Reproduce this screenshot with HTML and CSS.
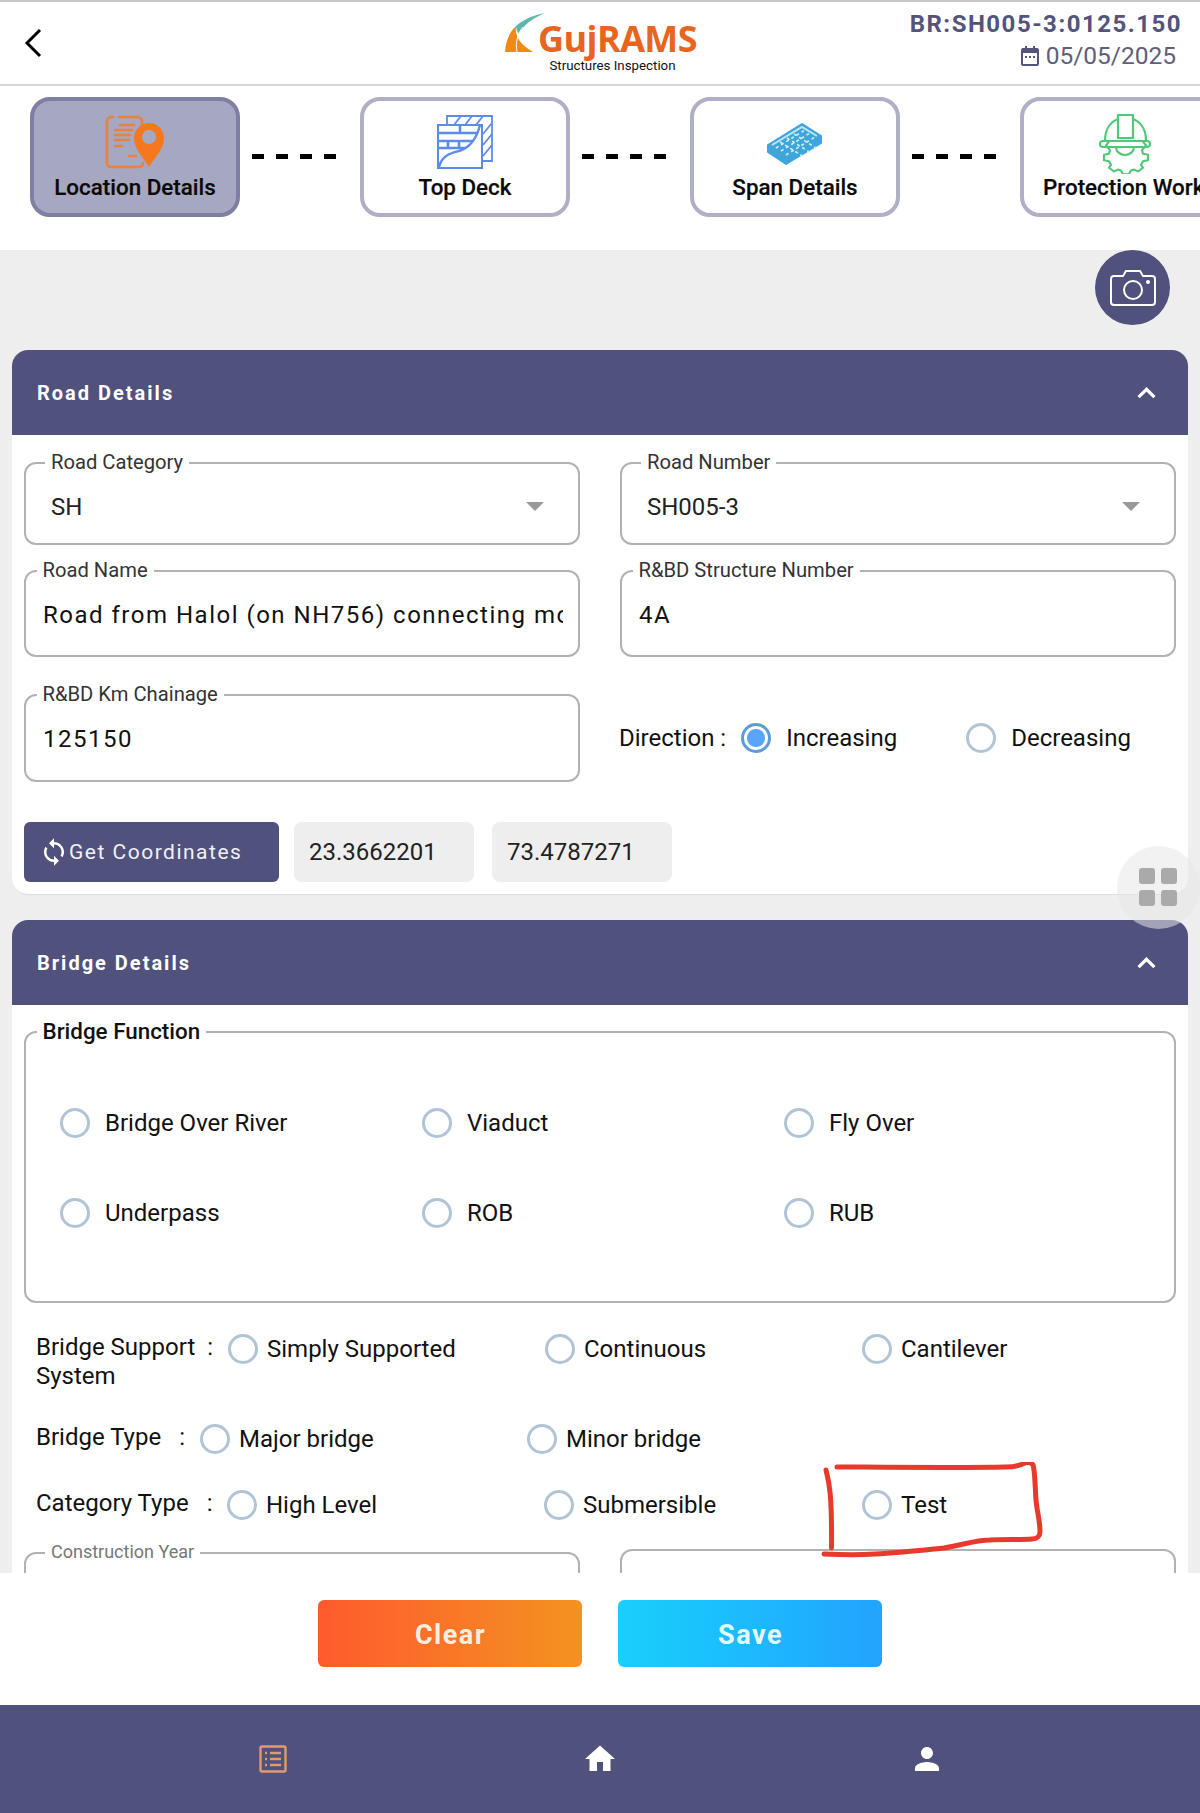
FILE: index.html
```html
<!DOCTYPE html>
<html lang="en">
<head>
<meta charset="utf-8">
<title>GujRAMS Structures Inspection</title>
<link rel="stylesheet" href="styles.css">
</head>
<body>
<div class="app">
  <header class="topbar">
    <svg class="back" viewBox="0 0 18 30"><path d="M16 2 3 15l13 13"/></svg>
    <div class="logo">
      <svg class="logo-mark" viewBox="0 0 40 40">
        <path fill="#f08a12" d="M0 39C1 26 5 19 11 13c-1 9 2 17 17 26z"/>
        <path fill="#5cb8ad" d="M11 13C20 5 30 2 40 0 28 5 18 12 14 21c-2-3-3-5-3-8z"/>
        <path fill="none" stroke="#fff" stroke-width="1" d="M12 39C10 29 13 20 18 14"/>
      </svg>
      <div class="logo-text">
        <span class="logo-name">GujRAMS</span>
        <span class="logo-sub">Structures Inspection</span>
      </div>
    </div>
    <div class="meta">
      <div class="meta-id">BR:SH005-3:0125.150</div>
      <div class="meta-date">
        <svg class="cal" viewBox="0 0 18 20"><path d="M4 0h2v2h6V0h2v2h2a2 2 0 0 1 2 2v14a2 2 0 0 1-2 2H2a2 2 0 0 1-2-2V4a2 2 0 0 1 2-2h2zM2 7v11h14V7zm2 3h2v2H4zm4 0h2v2H8zm4 0h2v2h-2z"/></svg>
        <span>05/05/2025</span>
      </div>
    </div>
  </header>

  <nav class="stepper">
    <div class="step step-active">
      <svg class="step-icon" viewBox="0 0 60 60">
        <g fill="none" stroke="#e8823c" stroke-width="2.6" stroke-linecap="round">
          <path d="M8 3H6a4 4 0 0 0-4 4v42a4 4 0 0 0 4 4h28a4 4 0 0 0 4-4"/>
          <path d="M14 3h18a5 5 0 0 1 5 5v4"/>
          <path d="M15 11h14M10 16h17M10 21h15M10 26h14M10 32h7M24 42h7"/>
        </g>
        <path fill="#f5781e" d="M44 9a15 15 0 0 1 15 15c0 11-9 19-15 29-6-10-15-18-15-29A15 15 0 0 1 44 9z"/>
        <circle cx="44" cy="23" r="7" fill="#a6a7c0"/>
      </svg>
      <span class="step-label">Location Details</span>
    </div>
    <div class="dashes"><i></i><i></i><i></i><i></i></div>
    <div class="step">
      <svg class="step-icon" viewBox="0 0 60 60">
        <g fill="none" stroke="#5b8de8" stroke-width="1.8">
          <path d="M12 11V2h45v45H47"/>
          <path d="M19 11l7-9M30 11l7-9M41 11l7-9M48 20l9-11M48 31l9-11M48 42l9-11"/>
          <rect x="3" y="11" width="44" height="43" fill="#fff" stroke-width="2"/>
          <path stroke-width="2.6" d="M3 19h42M3 27h40M3 34h36M25 11v8M13 27v7M24 27v7"/>
          <path fill="#fff" stroke="none" d="M5 53c3-12 12-14 20-16 10-3 16-10 20-24v40z"/>
          <path stroke-width="2.4" d="M4 53c3-12 12-14 20-16 10-3 17-10 21-26"/>
        </g>
      </svg>
      <span class="step-label">Top Deck</span>
    </div>
    <div class="dashes"><i></i><i></i><i></i><i></i></div>
    <div class="step">
      <svg class="step-icon" viewBox="0 0 60 60">
        <path fill="#3fa6dc" stroke="#3fa6dc" stroke-width="2" stroke-linejoin="round" d="M3 31 37 10l19 12v7L21 50 3 38z"/>
        <path fill="none" stroke="#bfe6f7" stroke-width="2" d="M7 31 37 13l15 9"/>
        <g fill="none" stroke="#d6f0fb" stroke-width="1.6" stroke-dasharray="3 3">
          <path d="M11 34 40 16M16 37 45 19M21 41 50 23M15 28l24 15M22 24l24 15M29 20l22 14"/>
        </g>
      </svg>
      <span class="step-label">Span Details</span>
    </div>
    <div class="dashes"><i></i><i></i><i></i><i></i></div>
    <div class="step">
      <svg class="step-icon" viewBox="0 0 60 60">
        <g fill="none" stroke="#4fc878" stroke-width="2.2" stroke-linejoin="round">
          <path d="M23 5C15 8 10 16 10 27M38 5c8 3 13 11 13 22"/>
          <rect x="5" y="27" width="50" height="6" rx="3"/>
          <rect x="23" y="1" width="15" height="23"/>
          <path d="M21 33a9 8 0 0 0 18 0"/>
          <path d="M14 33l-3 4 4 5-1 4-5 1v6l5 1 2 4-2 3 5 4 4-2 3 1 2 4h6l2-4 3-1 4 2 5-4-2-3 2-4 5-1v-6l-5-1-1-4 4-5-3-4" transform="translate(0 -3) scale(1 .93)"/>
        </g>
      </svg>
      <span class="step-label step-label-start">Protection Works</span>
    </div>
  </nav>

  <main class="content">
    <div class="camera-row">
      <button class="camera" type="button" aria-label="Camera">
        <svg viewBox="0 0 46 36"><g fill="none" stroke="#fff" stroke-width="2"><path d="M4 6h9l3-5h14l3 5h9a3 3 0 0 1 3 3v23a3 3 0 0 1-3 3H4a3 3 0 0 1-3-3V9a3 3 0 0 1 3-3z"/><circle cx="23" cy="20" r="9"/></g><circle cx="38" cy="12" r="2" fill="#fff"/></svg>
      </button>
    </div>

    <section class="panel">
      <div class="panel-head"><h2>Road Details</h2><svg class="chev" viewBox="0 0 18 11"><path d="M1.500 9.500 9 2l7.500 7.500"/></svg></div>
      <div class="panel-body">
        <div class="two">
          <div class="field field-select">
            <span class="legend legend-wide">Road Category</span>
            <span class="value">SH</span><i class="caret"></i>
          </div>
          <div class="field field-select">
            <span class="legend legend-wide">Road Number</span>
            <span class="value">SH005-3</span><i class="caret"></i>
          </div>
        </div>
        <div class="two two-name">
          <div class="field field-input">
            <span class="legend">Road Name</span>
            <span class="value value-spaced value-clip">Road from Halol (on NH756) connecting mo</span>
          </div>
          <div class="field field-input">
            <span class="legend">R&amp;BD Structure Number</span>
            <span class="value value-spaced">4A</span>
          </div>
        </div>
        <div class="two two-chain">
          <div class="field field-input field-chain">
            <span class="legend">R&amp;BD Km Chainage</span>
            <span class="value value-spaced">125150</span>
          </div>
          <div class="direction">
            <span class="direction-label">Direction :</span>
            <label class="option option-increasing"><i class="radio radio-on"></i>Increasing</label>
            <label class="option"><i class="radio"></i>Decreasing</label>
          </div>
        </div>
        <div class="coords">
          <button class="coord-btn" type="button">
            <svg viewBox="0 0 24 24"><path d="M12 4V1L8 5l4 4V6c3.310 0 6 2.690 6 6 0 1.010-.25 1.970-.7 2.800l1.460 1.460C19.540 15.030 20 13.570 20 12c0-4.420-3.580-8-8-8zm0 14c-3.310 0-6-2.690-6-6 0-1.010.25-1.970.7-2.800L5.240 7.740C4.460 8.970 4 10.430 4 12c0 4.420 3.580 8 8 8v3l4-4-4-4v3z"/></svg>
            <span>Get Coordinates</span>
          </button>
          <div class="coord-box">23.3662201</div>
          <div class="coord-box">73.4787271</div>
        </div>
      </div>
    </section>

    <section class="panel panel-bridge">
      <div class="panel-head"><h2>Bridge Details</h2><svg class="chev" viewBox="0 0 18 11"><path d="M1.500 9.500 9 2l7.500 7.500"/></svg></div>
      <div class="panel-body panel-body-bridge">
        <div class="function-box">
          <span class="legend legend-strong">Bridge Function</span>
          <div class="function-grid">
            <label class="option"><i class="radio"></i>Bridge Over River</label>
            <label class="option"><i class="radio"></i>Viaduct</label>
            <label class="option"><i class="radio"></i>Fly Over</label>
            <label class="option"><i class="radio"></i>Underpass</label>
            <label class="option"><i class="radio"></i>ROB</label>
            <label class="option"><i class="radio"></i>RUB</label>
          </div>
        </div>
        <div class="choice choice-support">
          <div class="choice-label">Bridge Support<span class="colon colon-near">:</span> System</div>
          <label class="option"><i class="radio"></i>Simply Supported</label>
          <label class="option"><i class="radio"></i>Continuous</label>
          <label class="option"><i class="radio"></i>Cantilever</label>
        </div>
        <div class="choice choice-type">
          <div class="choice-label">Bridge Type<span class="colon">:</span></div>
          <label class="option"><i class="radio"></i>Major bridge</label>
          <label class="option"><i class="radio"></i>Minor bridge</label>
        </div>
        <div class="choice choice-category">
          <div class="choice-label">Category Type<span class="colon">:</span></div>
          <label class="option"><i class="radio"></i>High Level</label>
          <label class="option"><i class="radio"></i>Submersible</label>
          <label class="option"><i class="radio"></i>Test</label>
        </div>
        <div class="two two-year">
          <div class="field field-input field-year">
            <span class="legend legend-wide legend-muted">Construction Year</span>
          </div>
          <div class="field field-input"></div>
        </div>
      </div>
    </section>
  </main>

  <div class="actions">
    <button class="action action-clear" type="button">Clear</button>
    <button class="action action-save" type="button">Save</button>
  </div>

  <footer class="tabbar">
    <svg class="tab tab-list" viewBox="0 0 28 28"><g fill="none" stroke="#e09a6b" stroke-width="2.400"><rect x="1.500" y="1.500" width="25" height="25" rx="1.500"/><path d="M11 8h11M11 14h11M11 20h11M6 8h2M6 14h2M6 20h2"/></g></svg>
    <svg class="tab" viewBox="0 0 24 24"><path fill="#fff" d="M10 20v-6h4v6h5v-8h3L12 3 2 12h3v8z"/></svg>
    <svg class="tab" viewBox="0 0 24 24"><path fill="#fff" d="M12 12c2.210 0 4-1.790 4-4s-1.790-4-4-4-4 1.790-4 4 1.790 4 4 4zm0 2c-2.670 0-8 1.340-8 4v2h16v-2c0-2.660-5.330-4-8-4z"/></svg>
  </footer>

  <div class="fab"><i></i><i></i><i></i><i></i></div>

  <svg class="scribble" viewBox="0 0 240 110">
    <path d="M6 8C9 20 12 30 11.500 86"/>
    <path d="M4 92c20 1 38 1 51 0 26-1 50-4 69-6 18-3 32-8 46-8 14-1 30 0 42-1 5 0 8-3 8-7 0-12-3-20-4-32-1-14-1-30-3-35-2-3-5-3-8-2-4 2-10 4-19 4-50 1-150 0-169 0"/>
  </svg>
</div>
</body>
</html>
```
FILE: styles.css
```css
* { box-sizing: border-box; }
html, body { margin: 0; padding: 0; }
body { font-family: Roboto, "Liberation Sans", sans-serif; color: #111; background: #fff; }
.app { position: relative; height: 1813px; width: 1200px; overflow: hidden; display: flex; flex-direction: column; }

.topbar { height: 86px; flex: none; display: grid; grid-template-columns: 1fr auto 1fr; align-items: center; border-top: 2px solid #c8c8c8; border-bottom: 2px solid #d6d6d6; padding: 0 19px 0 24px; background: #fff; }
.back { width: 18px; height: 30px; fill: none; stroke: #000; stroke-width: 3; }
.logo { display: flex; align-items: flex-start; margin-left: -3px; }
.logo-mark { width: 40px; height: 40px; flex: none; }
.logo-text { display: flex; flex-direction: column; align-items: center; margin-left: -7px; margin-top: 7px; }
.logo-name { font-family: "Open Sans", sans-serif; font-weight: 700; font-size: 36px; line-height: 38px; color: #e9641e; letter-spacing: -.6px; }
.logo-sub { font-family: Roboto, sans-serif; font-size: 13.300px; line-height: 16px; color: #111; margin-right: 10px; }
.meta { justify-self: end; text-align: right; margin-top: -5px; }
.meta-id { font-weight: 700; font-size: 24px; line-height: 30px; letter-spacing: 1.500px; color: #53547c; margin-right: -1px; }
.meta-date { display: flex; align-items: center; justify-content: flex-end; gap: 7px; font-size: 24.500px; line-height: 34px; color: #5d6079; padding-right: 5px; }
.cal { width: 18px; height: 20px; fill: #53547c; }

.stepper { height: 164px; flex: none; display: flex; align-items: flex-start; padding: 11px 0 0 30px; background: #fff; overflow: hidden; }
.step { flex: none; width: 210px; height: 120px; border: 4.500px solid #afafc6; border-radius: 20px; background: #fff; display: flex; flex-direction: column; align-items: center; padding-top: 13px; }
.step-active { background: #a6a7c0; border-color: #7e7fa3; }
.step-icon { width: 60px; height: 60px; flex: none; }
.step-label { font-weight: 500; font-size: 22.400px; line-height: 28px; margin-top: -1px; color: #0a0a0a; white-space: nowrap; -webkit-text-stroke: .2px #0a0a0a; }
.step-label-start { align-self: flex-start; margin-left: 19px; }
.dashes { flex: none; width: 120px; height: 119px; display: flex; justify-content: flex-start; align-items: center; gap: 12px; padding-left: 12px; }
.dashes i { width: 12px; height: 5px; background: #000; }

.content { flex: 1; min-height: 0; overflow: hidden; background: #eee; padding: 0 12px; }
.camera-row { height: 100px; display: flex; justify-content: flex-end; padding-right: 18px; }
.camera { width: 75px; height: 75px; padding: 0; border: 0; border-radius: 50%; background: #50517c; display: flex; align-items: center; justify-content: center; }
.camera svg { width: 46px; height: 36px; }

.panel { background: #fff; border-radius: 16px; overflow: hidden; border-bottom: 1px solid #ddd; }
.panel-bridge { margin-top: 25px; border-bottom: 0; }
.panel-head { height: 85px; background: #50517c; display: flex; align-items: center; justify-content: space-between; padding: 0 32px 0 25px; }
.panel-head h2 { margin: 0; font-size: 20px; font-weight: 700; letter-spacing: 2px; color: #fff; }
.chev { width: 19px; height: 12px; fill: none; stroke: #fff; stroke-width: 3; }
.panel-body { padding: 27px 12px 12px; }
.panel-body-bridge { padding-top: 26px; }

.two { display: grid; grid-template-columns: 556px 556px; column-gap: 40px; }
.two-name { margin-top: 25px; }
.two-chain { margin-top: 37px; }
.two-year { margin-top: 29px; }

.field { position: relative; border: 2px solid #b2b2b2; border-radius: 12px; display: flex; align-items: center; }
.field-select { height: 83px; padding: 6px 34px 0 25px; justify-content: space-between; }
.field-input { height: 87px; padding: 3px 17px 0; }
.field-chain { height: 88px; padding-top: 2px; }
.field-year { margin-top: 3px; }
.legend { position: absolute; top: -14px; left: 10.500px; padding: 0 6px; background: #fff; font-size: 20.200px; line-height: 24px; color: #333; white-space: nowrap; }
.legend-wide { left: 19px; }
.legend-muted { color: #777; font-size: 18px; }
.legend-strong { top: -14px; left: 10.500px; color: #111; font-weight: 500; font-size: 22.400px; }
.value { font-size: 24px; color: #222; }
.value-spaced { letter-spacing: 1.500px; color: #111; }
.value-clip { display: block; flex: none; overflow: hidden; white-space: nowrap; width: 520px; }
.caret { width: 0; height: 0; border-left: 9px solid transparent; border-right: 9px solid transparent; border-top: 9px solid #999; }

.option { display: flex; align-items: center; gap: 15px; font-size: 24px; line-height: 30px; color: #111; white-space: nowrap; }
.radio { flex: none; display: block; width: 30px; height: 30px; border-radius: 50%; border: 3px solid #b0c4d6; background: #fff; position: relative; }
.radio-on { border-color: #5b9bdc; background: radial-gradient(circle at center, #5aa5fb 0 8.500px, #fff 9.500px); }

.direction { display: flex; align-items: center; margin-left: -1px; }
.direction-label { font-size: 24px; color: #111; margin-right: 15px; }
.option-increasing { width: 225px; }

.coords { display: flex; margin-top: 40px; height: 60px; }
.coord-btn { width: 255px; border: 0; border-radius: 6px; background: #50517c; color: #f1f1f5; display: flex; align-items: center; padding: 0 0 0 15px; font: 400 21px Roboto, sans-serif; letter-spacing: 1.500px; }
.coord-btn svg { width: 30px; height: 30px; fill: #fff; flex: none; }
.coord-box { width: 180px; border-radius: 8px; background: #eee; font-size: 24px; line-height: 60px; padding-left: 15px; color: #222; margin-left: 15px; }
.coord-box + .coord-box { margin-left: 18px; }

.function-box { position: relative; height: 272px; border: 2px solid #b2b2b2; border-radius: 12px; padding: 75px 0 0 34px; }
.function-grid { display: grid; grid-template-columns: repeat(3, 362px); grid-auto-rows: 30px; row-gap: 60px; }

.choice { display: grid; align-items: start; padding-left: 12px; }
.choice .option { gap: 9px; }
.choice-support { margin-top: 31px; grid-template-columns: 192px 317px 317px 1fr; height: 58px; }
.choice-type { margin-top: 32px; grid-template-columns: 164px 327px 1fr; }
.choice-category { margin-top: 36px; grid-template-columns: 191px 317px 318px 1fr; }
.choice-label { font-size: 24px; line-height: 29px; color: #111; margin-top: -1px; }
.colon { margin-left: 18px; }
.colon-near { margin-left: 12px; }

.actions { flex: none; height: 132px; background: #fff; display: flex; justify-content: center; gap: 36px; padding-top: 27px; }
.action { width: 264px; height: 67px; border: 0; border-radius: 6px; padding: 2px 0 0 1px; color: #fff; font: 700 27px Roboto, sans-serif; letter-spacing: 1.500px; }
.action-clear { background: linear-gradient(90deg, #ff5a2e, #f39320); color: #fdeee0; }
.action-save { background: linear-gradient(90deg, #18d0fb, #22a3ff); color: #e4f8ff; }

.tabbar { flex: none; height: 108px; background: #50517c; display: flex; align-items: center; justify-content: space-between; padding: 0 255px; }
.tab { width: 36px; height: 36px; flex: none; }
.tab-list { width: 28px; height: 28px; margin: 0 4px; }

.fab { position: absolute; left: 1117px; top: 846px; width: 83px; height: 83px; border-radius: 50%; background: rgba(232,232,232,.55); display: grid; grid-template-columns: 16px 16px; grid-template-rows: 16px 16px; gap: 6px; padding: 22px 0 0 22px; }
.fab i { background: #aaa; border-radius: 3px; }

.scribble { position: absolute; left: 820px; top: 1462px; width: 240px; height: 110px; fill: none; stroke: #e83a2c; stroke-width: 5; stroke-linecap: round; stroke-linejoin: round; }
```
